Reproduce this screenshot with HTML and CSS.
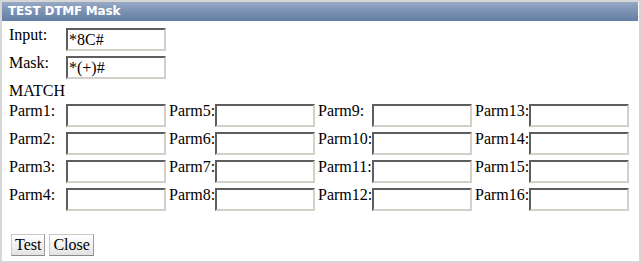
FILE: index.html
```html
<!DOCTYPE html>
<html>
<head>
<meta charset="utf-8">
<title>TEST DTMF Mask</title>
<link rel="stylesheet" href="styles.css">
</head>
<body>
<div class="dialog">
  <div class="titlebar">TEST DTMF Mask</div>
  <div class="content">
    <div class="grid">
      <div class="lbl first">Input:</div>
      <div class="cell"><input class="field" type="text" value="*8C#"></div>
      <div class="rest"></div>

      <div class="lbl first">Mask:</div>
      <div class="cell"><input class="field" type="text" value="*(+)#"></div>
      <div class="rest"></div>

      <div class="match">MATCH</div>

      <div class="lbl first">Parm1:</div><div class="cell"><input class="field" type="text"></div>
      <div class="lbl">Parm5:</div><div class="cell"><input class="field" type="text"></div>
      <div class="lbl">Parm9:</div><div class="cell"><input class="field" type="text"></div>
      <div class="lbl">Parm13:</div><div class="cell"><input class="field" type="text"></div>

      <div class="lbl first">Parm2:</div><div class="cell"><input class="field" type="text"></div>
      <div class="lbl">Parm6:</div><div class="cell"><input class="field" type="text"></div>
      <div class="lbl">Parm10:</div><div class="cell"><input class="field" type="text"></div>
      <div class="lbl">Parm14:</div><div class="cell"><input class="field" type="text"></div>

      <div class="lbl first">Parm3:</div><div class="cell"><input class="field" type="text"></div>
      <div class="lbl">Parm7:</div><div class="cell"><input class="field" type="text"></div>
      <div class="lbl">Parm11:</div><div class="cell"><input class="field" type="text"></div>
      <div class="lbl">Parm15:</div><div class="cell"><input class="field" type="text"></div>

      <div class="lbl first">Parm4:</div><div class="cell"><input class="field" type="text"></div>
      <div class="lbl">Parm8:</div><div class="cell"><input class="field" type="text"></div>
      <div class="lbl">Parm12:</div><div class="cell"><input class="field" type="text"></div>
      <div class="lbl">Parm16:</div><div class="cell"><input class="field" type="text"></div>
    </div>
    <div class="buttons">
      <button class="btn" type="button">Test</button>
      <button class="btn" type="button">Close</button>
    </div>
  </div>
</div>
</body>
</html>
```
FILE: styles.css
```css
html, body {
  margin: 0;
  padding: 0;
  background: #ffffff;
}

.dialog {
  box-sizing: border-box;
  width: 641px;
  height: 263px;
  border: 2px solid #d6d6d6;
  background: #ffffff;
  display: flex;
  flex-direction: column;
  font-family: "Times New Roman", "Liberation Serif", Tinos, "DejaVu Serif", serif;
  font-size: 16px;
  color: #000000;
}

.titlebar {
  height: 19px;
  line-height: 19px;
  margin-right: 1px;
  padding-left: 6px;
  background: linear-gradient(to bottom, #97a9c4 0%, #7b91b3 50%, #627ea4 100%);
  color: #ffffff;
  font-family: "DejaVu Sans", Verdana, sans-serif;
  font-weight: bold;
  font-size: 12px;
  letter-spacing: -0.2px;
}

.content {
  padding: 5px 0 0 4px;
  display: flex;
  flex-direction: column;
}

.grid {
  display: grid;
  grid-template-columns: 60px 100px 49px 100px 57px 100px 57px 100px;
  grid-template-rows: 28px 28px 20px repeat(4, 28px);
}

.rest {
  grid-column: 3 / 9;
}

.match {
  grid-column: 1 / 9;
  line-height: 18px;
  padding-left: 3px;
}

.lbl {
  line-height: 18px;
  padding-left: 3px;
  white-space: nowrap;
}

.cell {
  padding-top: 2px;
}

.field {
  box-sizing: border-box;
  display: block;
  width: 100px;
  height: 23px;
  margin: 0;
  padding: 0 1px;
  border-style: solid;
  border-width: 2px;
  border-color: #5e5e5e #d4d0c8 #d4d0c8 #5e5e5e;
  background: #ffffff;
  font-family: "Times New Roman", "Liberation Serif", Tinos, "DejaVu Serif", serif;
  font-size: 16px;
  color: #000000;
  outline: none;
}

.buttons {
  display: flex;
  gap: 4px;
  padding-left: 5px;
  margin-top: 20px;
}

.btn {
  box-sizing: border-box;
  height: 22px;
  margin: 0;
  padding: 0 3px;
  border: 1px solid;
  border-color: #c8c8c8 #9a9a9a #8a8a8a #c8c8c8;
  background: linear-gradient(to bottom, #ffffff 0%, #f2f2f2 50%, #e2e2e2 100%);
  font-family: "Times New Roman", "Liberation Serif", Tinos, "DejaVu Serif", serif;
  font-size: 16px;
  line-height: 18px;
  color: #000000;
}
```
